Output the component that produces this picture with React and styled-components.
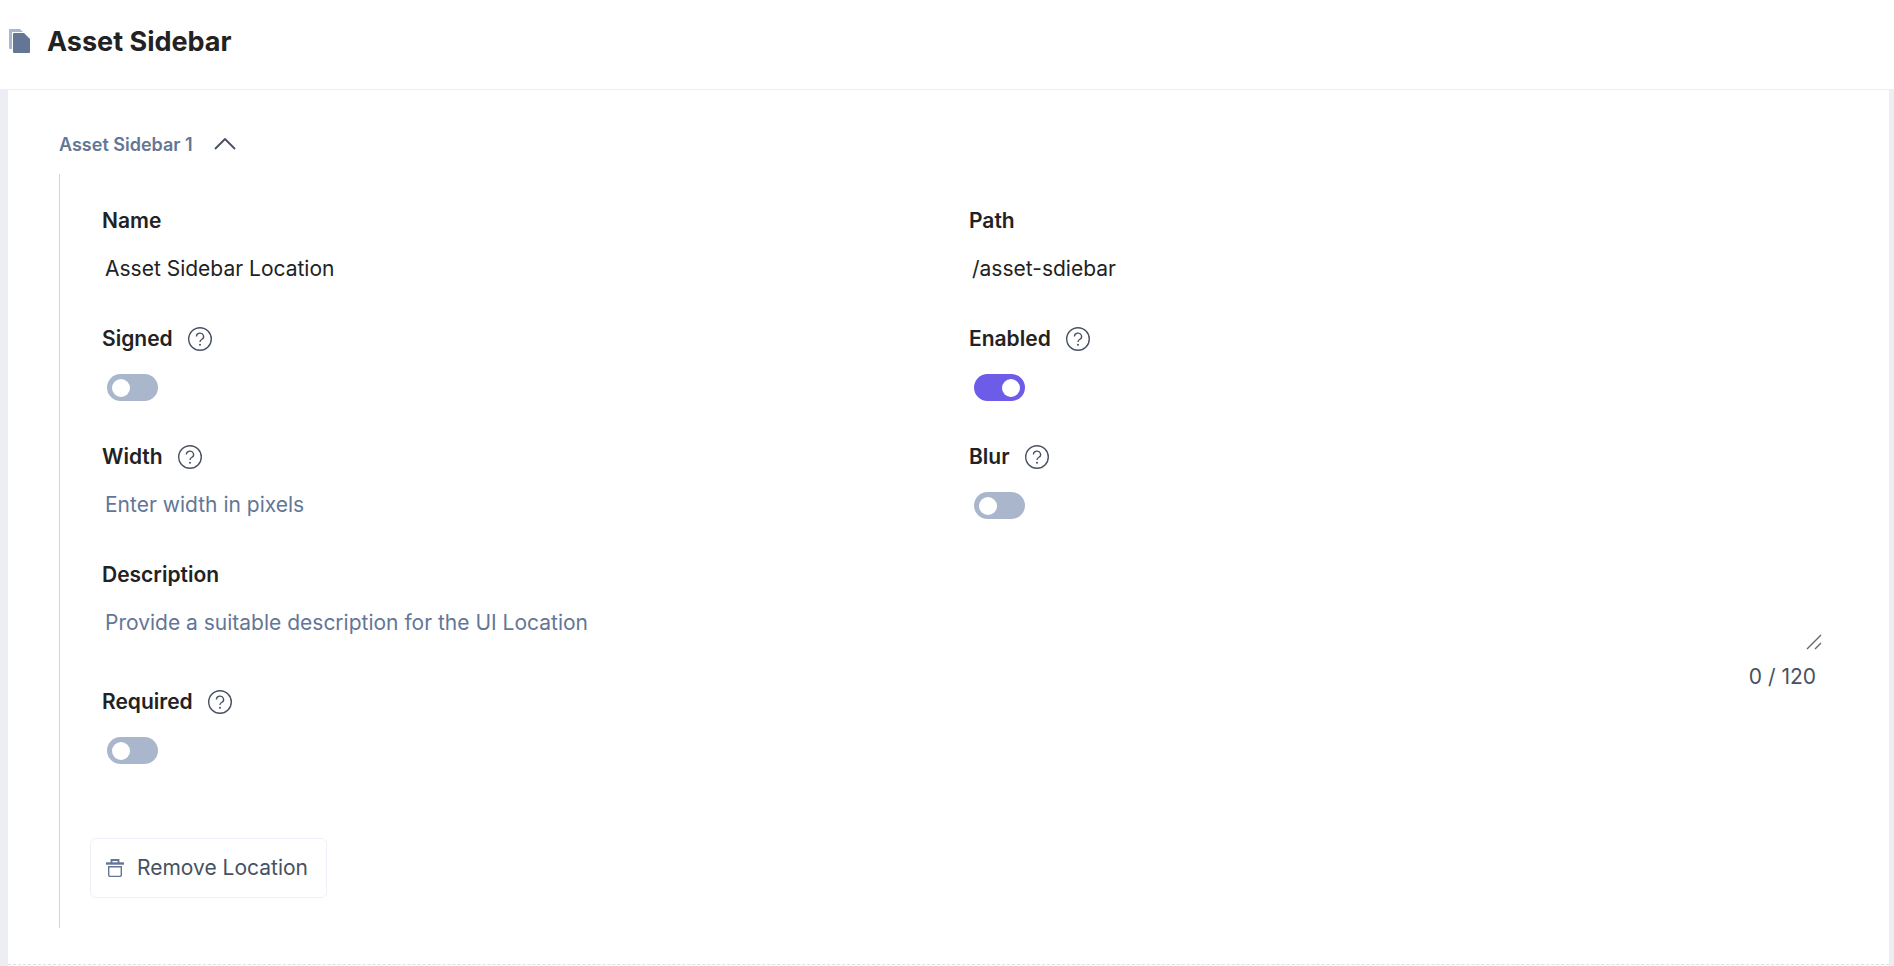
import React, { useState } from 'react';
import styled, { createGlobalStyle } from 'styled-components';

const GlobalStyle = createGlobalStyle`
	* {
		box-sizing: border-box;
	}

	body {
		margin: 0;
		color: #222;
		background-color: #edeef4;
		font-family: Inter, 'Liberation Sans', sans-serif;
		font-size: 21px;
		line-height: 30px;
	}
`;

const Header = styled.header`
	display: flex;
	align-items: center;
	gap: 16px;
	height: 90px;
	padding: 0 8px 6px;
	background-color: #fff;
	border-bottom: 1px solid #edeef5;
`;

const Title = styled.h1`
	margin: 0;
	font-size: 27px;
	font-weight: 700;
	line-height: 36px;
`;

const Panel = styled.main`
	margin: 0 5px 0 8px;
	padding: 37px 53px 0 51px;
	min-height: calc(100vh - 90px);
	background-color: #fff;
`;

const Toggler = styled.button`
	display: flex;
	align-items: center;
	gap: 20px;
	padding: 0;
	border: none;
	background: none;
	color: #647696;
	font: inherit;
	font-size: 18px;
	font-weight: 600;
	line-height: 36px;
	cursor: pointer;
`;

const Location = styled.section`
	margin-top: 11px;
	padding: 32px 0 30px 30px;
	border-left: 1px solid #d3d5db;
`;

const Form = styled.form`
	display: grid;
	grid-template-columns: 1fr 1fr;
	padding-left: 12px;
`;

const Field = styled.div`
	grid-column: ${({ $wide }) => ($wide ? '1 / -1' : 'auto')};
	min-height: 118px;
	padding-right: 14px;
`;

const LabelRow = styled.div`
	display: flex;
	align-items: center;
	gap: 15px;
`;

const Label = styled.label`
	font-weight: 600;
`;

const HelpButton = styled.button`
	display: flex;
	padding: 0;
	border: none;
	background: none;
	color: #475161;
	cursor: pointer;
`;

const Input = styled.input`
	display: block;
	width: 100%;
	margin-top: 16px;
	padding: 2px 3px;
	border: none;
	outline: none;
	color: inherit;
	background: none;
	font: inherit;

	&::placeholder {
		color: #647696;
		opacity: 1;
	}
`;

const TextareaBox = styled.div`
	position: relative;
	margin-top: 12px;
`;

const Textarea = styled(Input).attrs({ as: 'textarea' })`
	height: 48px;
	margin: 0;
	padding: 6px 3px;
	resize: none;
`;

const Grip = styled.svg`
	position: absolute;
	right: 0;
	bottom: 0;
`;

const Counter = styled.div`
	margin-top: 16px;
	padding-right: 6px;
	color: #475161;
	line-height: 21px;
	text-align: right;
`;

const Switch = styled.input.attrs({ type: 'checkbox', role: 'switch' })`
	display: flex;
	align-items: center;
	justify-content: ${({ checked }) => (checked ? 'flex-end' : 'flex-start')};
	width: 51px;
	height: 27px;
	margin: 20px 0 0 5px;
	padding: 0 5px;
	appearance: none;
	border-radius: 14px;
	background-color: ${({ checked }) => (checked ? '#6c5ce7' : '#a9b6cb')};
	cursor: pointer;

	&::before {
		content: '';
		width: 18px;
		height: 18px;
		border-radius: 50%;
		background-color: #fff;
	}
`;

const RemoveButton = styled.button`
	display: flex;
	align-items: center;
	gap: 13px;
	height: 60px;
	margin-top: 33px;
	padding: 0 18px 0 15px;
	border: 1px solid #edf1f7;
	border-radius: 6px;
	background-color: #fff;
	color: #475161;
	font: inherit;
	cursor: pointer;
`;

const Divider = styled.hr`
	margin: 36px -53px 0 -51px;
	border: none;
	border-top: 1px dashed #dddfe5;
`;

const PagesIcon = () => (
	<svg width="23" height="26" viewBox="0 0 23 26" aria-hidden="true">
		<path d="M1 1a1 1 0 0 1 1-1h10l3 3H4v17H2a1 1 0 0 1-1-1z" fill="#a9b6cb" />
		<path d="M5 5a1 1 0 0 1 1-1h10l6 6v13a1 1 0 0 1-1 1H6a1 1 0 0 1-1-1z" fill="#647696" />
	</svg>
);

const ChevronIcon = ({ open }) => (
	<svg width="24" height="24" viewBox="0 0 24 24" fill="none" aria-hidden="true">
		<path
			d={open ? 'M2 16 12 6l10 10' : 'M2 7l10 10L22 7'}
			stroke="#475161"
			strokeWidth="1.8"
			strokeLinejoin="round"
		/>
	</svg>
);

const HelpIcon = () => (
	<svg width="24" height="24" viewBox="0 0 24 24" fill="none" stroke="currentColor" aria-hidden="true">
		<circle cx="12" cy="12" r="11.3" strokeWidth="1.4" />
		<path d="M8.4 9.5a3.6 3.4 0 1 1 5.2 3c-1.1.6-1.6 1.1-1.6 2.4" strokeWidth="1.3" />
		<circle cx="12" cy="17.7" r="1" fill="currentColor" stroke="none" />
	</svg>
);

const TrashIcon = () => (
	<svg width="18" height="18" viewBox="0 0 18 18" fill="none" stroke="#647696" aria-hidden="true">
		<path d="M5.5 4V1h7v3" strokeWidth="1.8" />
		<path d="M0 4.5h18" strokeWidth="2.4" />
		<path d="M2.7 7.7h12.6V16a1.5 1.5 0 0 1-1.5 1.5H4.2A1.5 1.5 0 0 1 2.7 16z" strokeWidth="1.4" />
	</svg>
);

const FieldLabel = ({ id, text, help }) => (
	<LabelRow>
		<Label htmlFor={id}>{text}</Label>
		{help && (
			<HelpButton type="button" aria-label={`Help: ${text}`}>
				<HelpIcon />
			</HelpButton>
		)}
	</LabelRow>
);

const MAX_LENGTH = 120;

const App = () => {
	const [open, setOpen] = useState(true);
	const [values, setValues] = useState({
		name: 'Asset Sidebar Location',
		path: '/asset-sdiebar',
		signed: false,
		enabled: true,
		width: '',
		blur: false,
		description: '',
		required: false,
	});

	const changeFn = ({ target }) => {
		const value = target.type === 'checkbox' ? target.checked : target.value;
		setValues({ ...values, [target.id]: value });
	};

	const textProps = (id) => ({ id, value: values[id], onChange: changeFn });
	const switchProps = (id) => ({ id, checked: values[id], onChange: changeFn });

	return (
		<>
			<GlobalStyle />
			<Header>
				<PagesIcon />
				<Title>Asset Sidebar</Title>
			</Header>
			<Panel>
				<Toggler type="button" aria-expanded={open} onClick={() => setOpen(!open)}>
					Asset Sidebar 1
					<ChevronIcon open={open} />
				</Toggler>

				{open && (
					<Location>
						<Form>
							<Field>
								<FieldLabel id="name" text="Name" />
								<Input type="text" {...textProps('name')} />
							</Field>
							<Field>
								<FieldLabel id="path" text="Path" />
								<Input type="text" {...textProps('path')} />
							</Field>
							<Field>
								<FieldLabel id="signed" text="Signed" help />
								<Switch {...switchProps('signed')} />
							</Field>
							<Field>
								<FieldLabel id="enabled" text="Enabled" help />
								<Switch {...switchProps('enabled')} />
							</Field>
							<Field>
								<FieldLabel id="width" text="Width" help />
								<Input type="text" placeholder="Enter width in pixels" {...textProps('width')} />
							</Field>
							<Field>
								<FieldLabel id="blur" text="Blur" help />
								<Switch {...switchProps('blur')} />
							</Field>
							<Field $wide>
								<FieldLabel id="description" text="Description" />
								<TextareaBox>
									<Textarea
										maxLength={MAX_LENGTH}
										placeholder="Provide a suitable description for the UI Location"
										{...textProps('description')}
									/>
									<Grip width="16" height="16" viewBox="0 0 16 16" stroke="#666" strokeWidth="1.4">
										<path d="M1 15 15 1M9 15l6-6" />
									</Grip>
								</TextareaBox>
								<Counter>
									{values.description.length} / {MAX_LENGTH}
								</Counter>
							</Field>
							<Field>
								<FieldLabel id="required" text="Required" help />
								<Switch {...switchProps('required')} />
							</Field>
						</Form>
						<RemoveButton type="button">
							<TrashIcon />
							Remove Location
						</RemoveButton>
					</Location>
				)}
				<Divider />
			</Panel>
		</>
	);
};

export default App;
